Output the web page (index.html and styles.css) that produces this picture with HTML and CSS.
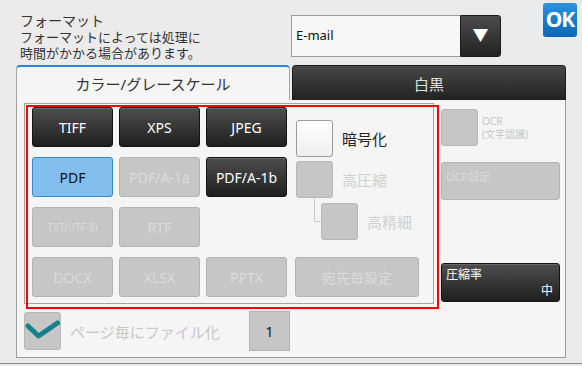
FILE: index.html
```html
<!DOCTYPE html>
<html lang="ja">
<head>
    <meta charset="UTF-8">
    <title>フォーマット</title>
    <link rel="stylesheet" href="styles.css">
</head>
<body>
<div class="screen">
    <div class="header">
        <div class="title-block">
            <div class="title">フォーマット</div>
            <div class="desc">フォーマットによっては処理に</div>
            <div class="desc">時間がかかる場合があります。</div>
        </div>
        <div class="select">
            <div class="select-value">E-mail</div>
            <div class="select-btn">▼</div>
        </div>
        <div class="ok">OK</div>
    </div>

    <div class="tabs">
        <div class="tab active">カラー/グレースケール</div>
        <div class="tab">白黒</div>
    </div>

    <div class="panel">
        <div class="panel-body">
            <div class="group">
                <div class="btn dark">TIFF</div>
                <div class="btn dark">XPS</div>
                <div class="btn dark">JPEG</div>
                <div class="opts">
                    <div class="opt">
                        <span class="box"></span>
                        <span class="opt-label on">暗号化</span>
                    </div>
                    <div class="opt">
                        <span class="box off"></span>
                        <span class="opt-label">高圧縮</span>
                    </div>
                    <div class="opt sub">
                        <span class="box off"></span>
                        <span class="opt-label">高精細</span>
                    </div>
                </div>
                <div class="btn selected">PDF</div>
                <div class="btn off">PDF/A-1a</div>
                <div class="btn dark">PDF/A-1b</div>
                <div class="btn off small">TXT(UTF-8)</div>
                <div class="btn off">RTF</div>
                <div class="btn off row4">DOCX</div>
                <div class="btn off row4">XLSX</div>
                <div class="btn off row4">PPTX</div>
                <div class="btn off row4 wide">宛先毎設定</div>
            </div>

            <div class="side">
                <div class="ocr">
                    <span class="box off"></span>
                    <span class="ocr-label"><span>OCR</span><span>(文字認識)</span></span>
                </div>
                <div class="btn off side-btn">OCR設定</div>
                <div class="btn dark rate">
                    <span>圧縮率</span>
                    <span class="rate-val">中</span>
                </div>
            </div>
        </div>

        <div class="bottom">
            <span class="box off check">
                <svg width="37" height="38" viewBox="0 0 37 38">
                    <polyline points="4,14 14.5,24 33.5,11" fill="none" stroke="#16808f" stroke-width="5" stroke-linecap="round" stroke-linejoin="round"/>
                </svg>
            </span>
            <span class="bottom-label">ページ毎にファイル化</span>
            <span class="count">1</span>
        </div>
    </div>
    <div class="foot-line"></div>

    <div class="highlight"></div>
</div>
</body>
</html>
```

FILE: styles.css
```css
*{box-sizing:border-box;}
body{margin:0;background:#ebebeb;font-family:"Noto Sans","Noto Sans CJK JP",sans-serif;color:#333;}
.screen{position:relative;width:582px;height:366px;overflow:hidden;}

.header{display:flex;align-items:flex-start;height:65px;}
.title-block{width:291px;padding:13px 0 0 20px;color:#333;font-family:"Liberation Sans","Noto Sans CJK JP",sans-serif;}
.title{font-size:14px;line-height:17px;height:17px;}
.desc{font-size:13px;line-height:16px;height:16px;}
.select{display:flex;width:210px;height:42px;margin-top:15px;}
.select-value{flex:1;background:#f7f7f7;border:1px solid #9a9a9a;border-right:none;font-size:13px;color:#111;padding:10px 0 0 4px;}
.select-btn{width:41px;background:linear-gradient(#4c4c4c,#222);border:1px solid #1a1a1a;border-radius:0 3px 3px 0;color:#fff;font-size:16px;text-align:center;line-height:38px;}
.ok{width:34px;height:34px;margin:3px 0 0 42px;background:linear-gradient(#2a93e0,#0b67b5);border-radius:3px;color:#fff;font-size:21px;font-weight:bold;text-align:center;line-height:33px;letter-spacing:-1px;}

.tabs{display:flex;gap:2px;margin:0 16px;height:35px;}
.tab{flex:1;display:flex;align-items:center;justify-content:center;font-size:15px;border-radius:4px 4px 0 0;background:linear-gradient(#474747,#222);color:#e0e0e0;border:1px solid #1c1c1c;border-bottom:none;}
.tab.active{background:#f5f5f5;color:#333;border:1px solid #a5a5a5;border-top:2px solid #2a86d6;border-bottom:none;}

.panel{margin:0 16px;height:258px;background:#f5f5f5;border:1px solid #9d9d9d;border-top:none;padding:3px 5px 0 7px;}
.panel-body{display:grid;grid-template-columns:410px 119px;column-gap:7px;}

.group{height:201px;border:1px solid #a3a3a3;padding:3px 0 0 7px;display:grid;grid-template-columns:81px 81px 81px 126px;grid-template-rows:40px 40px 40px 40px;column-gap:6px;row-gap:10px;}

.btn{display:flex;align-items:center;justify-content:center;font-size:14px;border-radius:3px;}
.btn.dark{background:linear-gradient(#4e4e4e,#1f1f1f);border:1px solid #141414;color:#fff;box-shadow:inset 0 1px 0 #666;}
.btn.off{background:#c6c6c6;border:1px solid #b3b3b3;color:#dcdcdc;}
.btn.selected{background:#82bfef;border:1px solid #3189d4;color:#111;}
.btn.small{font-size:10px;}
.btn.row4{grid-row:4;}
.btn.wide{margin-left:2px;width:124px;}

.opts{grid-column:4;grid-row:1/4;padding:13px 0 0 3px;display:flex;flex-direction:column;gap:4px;}
.opt{display:flex;align-items:center;gap:9px;position:relative;}
.opt.sub{margin:1px 0 0 25px;}
.opt.sub::before{content:"";position:absolute;left:-7px;top:-5px;width:7px;height:23px;border-left:1px solid #cacaca;border-bottom:1px solid #cacaca;}
.box{display:block;width:37px;height:37px;border-radius:3px;background:linear-gradient(#fff,#eee);border:1px solid #9a9a9a;flex:none;}
.box.off{background:#c6c6c6;border-color:#b7b7b7;}
.opt-label{font-size:15px;color:#d0d0d0;}
.opt-label.on{color:#222;}

.side{display:flex;flex-direction:column;padding-top:6px;}
.ocr{display:flex;align-items:center;gap:4px;}
.ocr-label{display:flex;flex-direction:column;font-size:10px;line-height:13px;color:#c5c5c5;}
.side-btn{height:38px;margin-top:16px;justify-content:flex-start;align-items:flex-start;padding:5px 0 0 4px;font-size:11px;}
.rate{height:39px;margin-top:63px;flex-direction:column;align-items:stretch;justify-content:space-between;padding:4px 6px 3px 4px;font-size:12px;line-height:14px;}
.rate-val{text-align:right;}

.bottom{display:flex;align-items:center;margin-top:7px;}
.box.check{height:38px;}
.box.check svg{display:block;margin:-1px;}
.bottom-label{width:188px;padding-left:9px;font-size:15px;color:#c8c8c8;}
.count{width:41px;height:40px;background:#c6c6c6;border:1px solid #b3b3b3;font-size:14px;color:#111;display:flex;align-items:center;justify-content:center;}

.foot-line{margin-top:5px;height:1px;background:#8a8a8a;}

.highlight{position:absolute;left:26px;top:105px;width:413px;height:204px;border:2px solid #f00;pointer-events:none;}
```
